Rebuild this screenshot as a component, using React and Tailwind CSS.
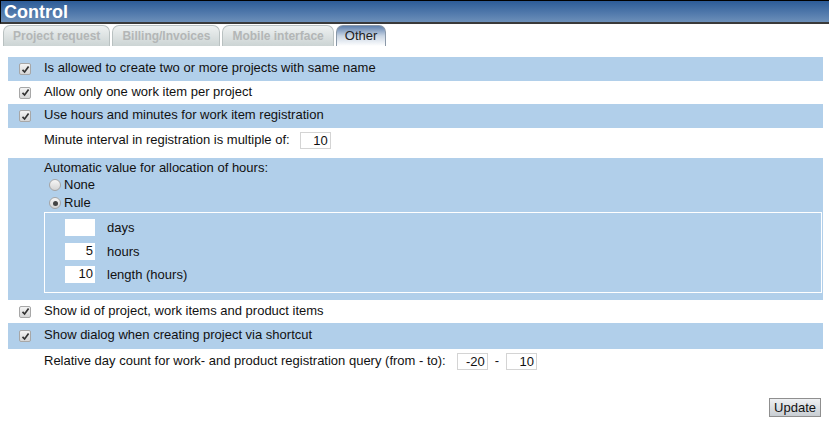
import React from "react";

function Check() {
  return (
    <span className="inline-flex items-center justify-center w-[12px] h-[12px] rounded-[2px] border border-[#a7a7a7] bg-gradient-to-b from-[#f4f4f4] to-[#d6d6d6]">
      <svg width="9" height="9" viewBox="0 0 9 9">
        <path d="M1.5 4.8 L3.6 7 L7.6 1.6" fill="none" stroke="#333" strokeWidth="1.7" />
      </svg>
    </span>
  );
}

function Radio({ checked }) {
  return (
    <span className="inline-flex items-center justify-center w-[12px] h-[12px] rounded-full border border-[#a5a5a5] bg-gradient-to-b from-[#f6f6f6] to-[#d4d4d4]">
      {checked && <span className="w-[5px] h-[5px] rounded-full bg-[#444]" />}
    </span>
  );
}

function CheckRow({ label, blue, h = "h-[24px]" }) {
  return (
    <div className={`flex items-center ${h} ${blue ? "bg-[#b1cfea]" : ""}`}>
      <div className="w-[36px] pl-[11px] flex items-center">
        <Check />
      </div>
      <span className="-mt-[2px]">{label}</span>
    </div>
  );
}

function Box({ value, w = "w-[31px]", border = true }) {
  return (
    <span
      className={`inline-block ${w} h-[17px] leading-[16px] bg-white text-right pr-[2px] ${
        border ? "border border-[#d4d4d4]" : ""
      }`}
    >
      {value}
    </span>
  );
}

const tabs = ["Project request", "Billing/Invoices", "Mobile interface"];

export default function App() {
  return (
    <div className="w-[831px] h-[424px] bg-white text-[13px] text-[#111] font-['Liberation_Sans',Arial,sans-serif] relative">
      {/* header */}
      <div className="w-[829px] h-[24px] border-t border-l border-black border-b-2 border-b-[#3a3a3a] bg-gradient-to-b from-[#2c5c98] to-[#6c8fb9] flex items-center pl-[3px]">
        <span className="text-white font-bold text-[18px] leading-none">Control</span>
      </div>

      {/* tabs */}
      <div className="flex items-end gap-[2px] pl-[3px] h-[22px] text-[12px]">
        {tabs.map((t) => (
          <div
            key={t}
            className="h-[21px] px-[9px] flex items-center rounded-t-[7px] border border-b-0 border-[#b9c1c1] bg-gradient-to-b from-[#eef1f1] to-[#ccd4d4] text-[#b3b6b6] font-bold"
          >
            {t}
          </div>
        ))}
        <div className="h-[21px] px-[8px] flex items-center rounded-t-[7px] border border-b-0 border-[#8a98a8] bg-gradient-to-b from-[#5e80ad] via-[#c9d5e3] to-white text-[#222] text-[13px]">
          Other
        </div>
      </div>

      {/* content */}
      <div className="ml-[8px] w-[815px] mt-[11px]">
        <CheckRow blue label="Is allowed to create two or more projects with same name" />
        <CheckRow label="Allow only one work item per project" h="h-[23px]" />
        <CheckRow blue label="Use hours and minutes for work item registration" />
        <div className="flex items-center h-[24px] pl-[36px]">
          <span className="mr-[10px]">Minute interval in registration is multiple of:</span>
          <Box value="10" />
        </div>

        <div className="mt-[6px] bg-[#b1cfea] pt-[2px] pb-[7px] pl-[36px] pr-[1px]">
          <div className="h-[16px] leading-[16px]">Automatic value for allocation of hours:</div>
          <div className="flex items-center h-[18px] pl-[5px] gap-[3px]">
            <Radio /> <span>None</span>
          </div>
          <div className="flex items-center h-[18px] pl-[5px] gap-[3px]">
            <Radio checked /> <span>Rule</span>
          </div>
          <div className="border border-white h-[81px] pt-[3px] pl-[20px]">
            {[
              ["", "days"],
              ["5", "hours"],
              ["10", "length (hours)"],
            ].map(([v, l]) => (
              <div key={l} className="flex items-center h-[23.5px]">
                <Box value={v} w="w-[30px]" border={false} />
                <span className="ml-[12px]">{l}</span>
              </div>
            ))}
          </div>
        </div>

        <CheckRow label="Show id of project, work items and product items" h="h-[23px]" />
        <CheckRow blue label="Show dialog when creating project via shortcut" h="h-[26px]" />
        <div className="flex items-center h-[24px] pl-[36px]">
          <span className="mr-[11px]">Relative day count for work- and product registration query (from - to):</span>
          <Box value="-20" />
          <span className="mx-[7px]">-</span>
          <Box value="10" />
        </div>
      </div>

      <div className="flex justify-end pr-[10px] mt-[25px]">
        <button className="h-[19px] px-[4px] border border-[#8f8f8f] bg-gradient-to-b from-[#eef0f2] to-[#c9ced3] text-[13px] leading-none text-[#111]">
          Update
        </button>
      </div>
    </div>
  );
}
